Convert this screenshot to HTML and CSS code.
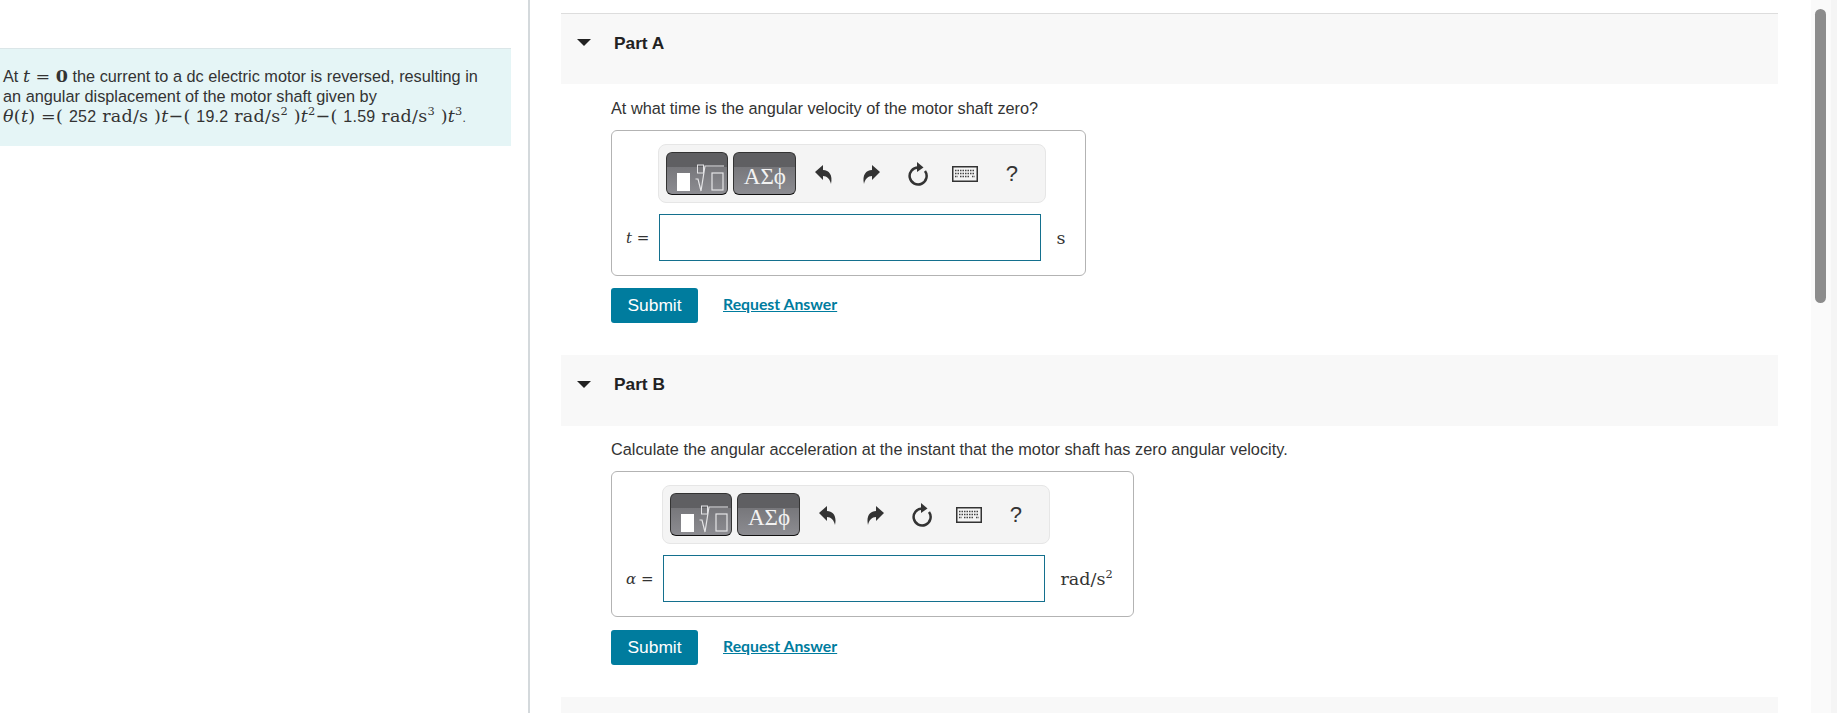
FILE: index.html
```html
<!DOCTYPE html>
<html lang="en">
<head>
  <meta charset="UTF-8" />
  <title>Part A and Part B</title>
  <link rel="stylesheet" href="styles.css">
</head>
<body>

<div class="page">
  <div class="side">
    <div class="callout">
      At <span class="math"><i>t</i> = <b>0</b></span> the current to a dc electric motor is reversed, resulting in an angular displacement of the motor shaft given by
      <span class="formula"><span class="math"><i>θ</i>(<i>t</i>) =( <span class="num">252</span> rad/s )<i>t</i>−( <span class="num">19.2</span> rad/s<sup>2</sup> )<i>t</i><sup>2</sup>−( <span class="num">1.59</span> rad/s<sup>3</sup> )<i>t</i><sup>3</sup></span><span class="dot">.</span></span>
    </div>
  </div>

  <div class="main">
    <div class="part">
      <div class="part-head">
        <span class="caret"></span>
        <h3>Part A</h3>
      </div>
      <div class="part-body">
        <p class="question">At what time is the angular velocity of the motor shaft zero?</p>
        <div class="answer">
          <div class="toolbar">
            <span class="tpl-btn">
              <svg class="tpl-icon" viewBox="0 0 62 43" width="62" height="43"><rect x="11" y="21" width="13" height="18" fill="#fff"/><rect x="31.5" y="13" width="6" height="8" fill="none" stroke="#e4e4e6"/><path d="M29.5 27l2.500 0 3 12 4-25h19" fill="none" stroke="#e4e4e6" stroke-width="1.200"/><rect x="46" y="21" width="11" height="17" fill="none" stroke="#e4e4e6" stroke-width="1.200"/></svg>
            </span>
            <span class="tpl-btn greek">ΑΣϕ</span>
            <span class="tool"><svg viewBox="0 0 18 20" width="18" height="20"><path class="solid" d="M0 8L8 1v5c6 0 10 5 8 14-1-5-4-8-8-8v4z"/></svg></span>
            <span class="tool"><svg class="flip" viewBox="0 0 18 20" width="18" height="20"><path class="solid" d="M0 8L8 1v5c6 0 10 5 8 14-1-5-4-8-8-8v4z"/></svg></span>
            <span class="tool"><svg viewBox="0 0 22 24" width="22" height="24"><path d="M11 5.500a8.500 8.500 0 1 0 7 3.500" fill="none" stroke="#333" stroke-width="2.500"/><path class="solid" d="M10 0l6.500 5.500-6.500 4.500z"/></svg></span>
            <span class="tool"><svg viewBox="0 0 26 16" width="26" height="16"><rect x=".75" y=".75" width="24.500" height="14.500" fill="#f4f4f4" stroke="#333" stroke-width="1.500"/><path d="M3 4.500h20M3 7.500h20M3 10.500h3M8 10.500h10M20 10.500h3" stroke="#444" stroke-width="1.300" stroke-dasharray="1.500 1" fill="none"/></svg></span>
            <span class="tool help">?</span>
          </div>
          <span class="label"><i>t</i> =</span>
          <input class="field" type="text" />
          <span class="unit">s</span>
        </div>
        <div class="actions">
          <button class="submit">Submit</button>
          <a class="request" href="#">Request Answer</a>
        </div>
      </div>
    </div>

    <div class="part">
      <div class="part-head">
        <span class="caret"></span>
        <h3>Part B</h3>
      </div>
      <div class="part-body">
        <p class="question">Calculate the angular acceleration at the instant that the motor shaft has zero angular velocity.</p>
        <div class="answer">
          <div class="toolbar">
            <span class="tpl-btn">
              <svg class="tpl-icon" viewBox="0 0 62 43" width="62" height="43"><rect x="11" y="21" width="13" height="18" fill="#fff"/><rect x="31.5" y="13" width="6" height="8" fill="none" stroke="#e4e4e6"/><path d="M29.5 27l2.500 0 3 12 4-25h19" fill="none" stroke="#e4e4e6" stroke-width="1.200"/><rect x="46" y="21" width="11" height="17" fill="none" stroke="#e4e4e6" stroke-width="1.200"/></svg>
            </span>
            <span class="tpl-btn greek">ΑΣϕ</span>
            <span class="tool"><svg viewBox="0 0 18 20" width="18" height="20"><path class="solid" d="M0 8L8 1v5c6 0 10 5 8 14-1-5-4-8-8-8v4z"/></svg></span>
            <span class="tool"><svg class="flip" viewBox="0 0 18 20" width="18" height="20"><path class="solid" d="M0 8L8 1v5c6 0 10 5 8 14-1-5-4-8-8-8v4z"/></svg></span>
            <span class="tool"><svg viewBox="0 0 22 24" width="22" height="24"><path d="M11 5.500a8.500 8.500 0 1 0 7 3.500" fill="none" stroke="#333" stroke-width="2.500"/><path class="solid" d="M10 0l6.500 5.500-6.500 4.500z"/></svg></span>
            <span class="tool"><svg viewBox="0 0 26 16" width="26" height="16"><rect x=".75" y=".75" width="24.500" height="14.500" fill="#f4f4f4" stroke="#333" stroke-width="1.500"/><path d="M3 4.500h20M3 7.500h20M3 10.500h3M8 10.500h10M20 10.500h3" stroke="#444" stroke-width="1.300" stroke-dasharray="1.500 1" fill="none"/></svg></span>
            <span class="tool help">?</span>
          </div>
          <span class="label"><i>α</i> =</span>
          <input class="field" type="text" />
          <span class="unit">rad/s<sup>2</sup></span>
        </div>
        <div class="actions">
          <button class="submit">Submit</button>
          <a class="request" href="#">Request Answer</a>
        </div>
      </div>
    </div>

    <div class="part-head next"></div>
  </div>

  <div class="scrollbar"><div class="thumb"></div></div>
</div>

</body>
</html>
```

FILE: styles.css
```css
* {
  box-sizing: border-box;
}
html, body {
  margin: 0;
  height: 100%;
  overflow: hidden;
}
body {
  font-family: "Liberation Sans", Arial, sans-serif;
  font-size: 16.3px;
  color: #333;
  background: #fff;
}
.page {
  display: flex;
  height: 713px;
}

/* left column */
.side {
  width: 530px;
  flex: none;
  border-right: 2px solid #d4d9dc;
  padding-top: 48px;
}
.callout {
  width: 511px;
  height: 98px;
  background: #e5f5f6;
  border-top: 1px solid #dbe6e8;
  padding: 17px 20px 0 3px;
  line-height: 20px;
}
.formula {
  display: block;
  letter-spacing: .25px;
}
.math {
  font-family: "DejaVu Serif", serif;
  font-size: 17.5px;
  line-height: 1;
}
.num {
  font-family: "Liberation Sans", Arial, sans-serif;
  font-size: 16px;
}
.dot {
  font-size: 12px;
}
sup {
  font-size: 65%;
  line-height: 0;
}

/* right column */
.main {
  flex: 1;
  min-width: 0;
  padding: 13px 33px 0 31px;
}
.part {
  height: 342px;
}
.part-head {
  display: flex;
  align-items: flex-start;
  height: 71px;
  background: #f8f8f8;
  border-top: 1px solid #ddd;
  padding: 19px 0 0 16px;
}
.part + .part .part-head,
.part-head.next {
  border-top-color: #f8f8f8;
}
.part-head.next {
  height: 16px;
}
.caret {
  width: 0;
  height: 0;
  margin-top: 6px;
  border-left: 7px solid transparent;
  border-right: 7px solid transparent;
  border-top: 7px solid #222;
}
.part-head h3 {
  margin: 0 0 0 23px;
  font-size: 17.3px;
  line-height: 20px;
  color: #222;
}
.part + .part h3 {
  margin-top: -1px;
}
.part-body {
  padding-left: 50px;
}
.question {
  margin: 0;
  padding-top: 14px;
  height: 46px;
  line-height: 20px;
}
.part + .part .question {
  padding-top: 13px;
  height: 45px;
}
.part + .part .actions {
  margin-top: 13px;
}
.answer {
  display: inline-grid;
  grid-template-columns: auto 382px auto;
  align-items: center;
  border: 1px solid #b3b3b3;
  border-radius: 6px;
  padding: 13px 20px 14px 14px;
  vertical-align: top;
}
.toolbar {
  grid-column: 2 / 4;
  display: flex;
  align-items: center;
  width: 388px;
  height: 59px;
  margin: 0 0 11px -1px;
  padding-left: 7px;
  background: #f4f4f4;
  border: 1px solid #e6e6e6;
  border-radius: 8px;
}
.tpl-btn {
  display: block;
  width: 62px;
  height: 43px;
  margin-right: 5px;
  border: 1px solid #333;
  border-bottom-color: #111;
  border-radius: 6px;
  background: linear-gradient(#5f5f62 0, #5f5f62 14px, #77777b 14px, #8c8c91 100%);
  overflow: hidden;
}
.tpl-icon {
  display: block;
  margin: -1px;
}
.greek {
  width: 63px;
  margin-right: 4px;
  padding-top: 12px;
  text-align: center;
  font-family: "Liberation Serif", serif;
  font-size: 23px;
  line-height: 24px;
  color: #f2f2f2;
}
.tool {
  display: flex;
  align-items: center;
  justify-content: center;
  width: 47px;
  height: 30px;
}
.solid {
  fill: #333;
}
.flip {
  transform: scaleX(-1);
}
.help {
  font-size: 22px;
  color: #333;
}
.label {
  padding-right: 10px;
  font-family: "DejaVu Serif", serif;
  font-size: 15px;
  text-align: right;
}
.field {
  display: block;
  width: 382px;
  height: 47px;
  border: 1px solid #14708e;
  background: #fff;
}
.unit {
  margin-left: 15px;
  font-family: "DejaVu Serif", serif;
  font-size: 17.5px;
  line-height: 24px;
}
.actions {
  display: flex;
  align-items: center;
  margin-top: 12px;
}
.submit {
  width: 87px;
  height: 35px;
  padding: 0;
  background-color: #007c9e;
  color: white;
  font-family: "Liberation Sans", Arial, sans-serif;
  font-size: 17.4px;
  border: none;
  border-radius: 3px;
  cursor: pointer;
}
.request {
  margin: 0 0 4px 25px;
  font-family: "Lato", sans-serif;
  font-size: 15.8px;
  font-weight: bold;
  color: #007c9e;
}

/* page scrollbar */
.scrollbar {
  width: 26px;
  flex: none;
  padding: 9px 5px 0 4px;
  background: #fafafa;
  border-right: 6px solid #f5f5f5;
}
.thumb {
  width: 11px;
  height: 294px;
  background: #8c8c8c;
  border-radius: 6px;
}
```
